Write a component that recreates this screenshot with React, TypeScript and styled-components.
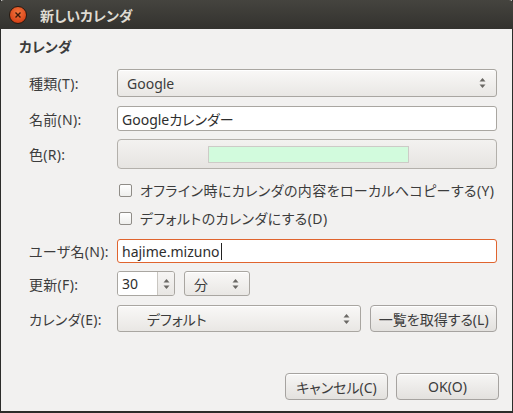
import React, { FC } from "react"
import styled, { createGlobalStyle } from "styled-components"

const GlobalStyle = createGlobalStyle`
  html, body {
    margin: 0;
    padding: 0;
    background: #f2f1f0;
  }
  body {
    font-family: "Noto Sans", "Noto Sans CJK JP", sans-serif;
    font-size: 14px;
    font-feature-settings: "palt";
    color: #3c3c3c;
  }
`

const Window = styled.div`
  width: 513px;
  height: 413px;
  box-sizing: border-box;
  display: flex;
  flex-direction: column;
  background: #f2f1f0;
  border: 1px solid #2c2c2a;
  border-top: none;
  border-bottom-width: 2px;
`

const TitleBar = styled.div`
  height: 29px;
  flex: none;
  display: flex;
  align-items: center;
  gap: 13px;
  padding-left: 9px;
  margin: 0 -1px;
  background: linear-gradient(#45443f, #33322e);
  color: #dfdbd2;
  font-weight: bold;
  font-size: 14px;
  border-radius: 4px 4px 0 0;
`

const CloseBtn = styled.div`
  width: 18px;
  height: 18px;
  border-radius: 50%;
  background: radial-gradient(circle at 50% 35%, #f4773f, #d9461a 70%, #a83312);
  border: 1px solid #2a1a10;
  display: flex;
  align-items: center;
  justify-content: center;
  box-sizing: border-box;
`

const Body = styled.div`
  flex: 1;
  display: flex;
  flex-direction: column;
  padding: 8px 15px 0 17px;
`

const Heading = styled.div`
  font-weight: bold;
  height: 19px;
  line-height: 19px;
  padding-left: 1px;
`

const Row = styled.div<{ $mt: number; $h: number }>`
  display: grid;
  grid-template-columns: 99px 380px;
  align-items: center;
  margin-top: ${p => p.$mt}px;
  height: ${p => p.$h}px;
`

const Label = styled.div`
  padding-left: 11px;
  white-space: nowrap;
  letter-spacing: 0.3px;
`

const Field = styled.div`
  display: flex;
  align-items: center;
  gap: 9px;
  height: 100%;
`

const Combo = styled.div<{ $w?: number }>`
  box-sizing: border-box;
  height: 100%;
  width: ${p => (p.$w ? `${p.$w}px` : "100%")};
  border: 1px solid #a9a6a1;
  border-radius: 3px;
  background: linear-gradient(#f9f8f7, #e9e7e4);
  display: flex;
  align-items: center;
  justify-content: space-between;
  padding: 0 10px 0 9px;
  box-shadow: inset 0 1px 0 #fff;
`

const ComboText = styled.span<{ $pad?: number }>`
  padding-left: ${p => p.$pad || 0}px;
`

const Entry = styled.div<{ $focus?: boolean }>`
  box-sizing: border-box;
  height: 100%;
  width: 100%;
  background: #fff;
  border: 1px solid ${p => (p.$focus ? "#e0642e" : "#a9a6a1")};
  border-radius: 3px;
  display: flex;
  align-items: center;
  padding-left: 4px;
  color: #2e2e2e;
`

const Caret = styled.span`
  display: inline-block;
  width: 1px;
  height: 17px;
  background: #222;
  margin-left: 1px;
`

const ColorButton = styled.div`
  box-sizing: border-box;
  height: 100%;
  width: 100%;
  border: 1px solid #b3b0ab;
  border-radius: 4px;
  background: linear-gradient(#f3f2f0, #e6e4e1);
  display: flex;
  align-items: center;
  justify-content: center;
`

const Swatch = styled.div`
  width: 201px;
  height: 17px;
  box-sizing: border-box;
  background: #d2fbdd;
  border: 1px solid #cdcbc7;
  margin-left: 2px;
`

const CheckRow = styled.label`
  display: flex;
  align-items: center;
  gap: 8px;
  padding-left: 2px;
  white-space: nowrap;
  letter-spacing: 0.4px;
`

const CheckBox = styled.span`
  width: 13px;
  height: 13px;
  flex: none;
  box-sizing: border-box;
  border: 1px solid #8f8c87;
  border-radius: 2px;
  background: linear-gradient(#fff, #eeeeec);
`

const Spin = styled.div`
  box-sizing: border-box;
  width: 58px;
  height: 100%;
  display: flex;
  border: 1px solid #a9a6a1;
  border-radius: 3px;
  overflow: hidden;
`

const SpinValue = styled.div`
  flex: 1;
  background: #fff;
  display: flex;
  align-items: center;
  padding-left: 4px;
  color: #2e2e2e;
`

const SpinButtons = styled.div`
  width: 16px;
  border-left: 1px solid #c9c6c1;
  background: linear-gradient(#f6f5f4, #e8e6e3);
  display: flex;
  align-items: center;
  justify-content: center;
`

const Button = styled.div<{ $w: number }>`
  box-sizing: border-box;
  width: ${p => p.$w}px;
  height: 100%;
  border: 1px solid #a6a3a0;
  border-radius: 4px;
  background: linear-gradient(#f7f6f5, #e3e1de);
  display: flex;
  align-items: center;
  justify-content: center;
  white-space: nowrap;
  box-shadow: inset 0 1px 0 #fff;
`

const Footer = styled.div`
  margin-top: auto;
  margin-bottom: 11px;
  height: 27px;
  display: flex;
  justify-content: flex-end;
  gap: 8px;
  margin-right: -2px;
`

const Arrows: FC = () => (
  <svg width="7" height="12" viewBox="0 0 7 12">
    <path d="M3.5 1 L6.5 4.5 H0.5 Z" fill="#6a6864" />
    <path d="M3.5 11 L6.5 7.5 H0.5 Z" fill="#6a6864" />
  </svg>
)

const App: FC = () => {
  return (
    <>
      <GlobalStyle />
      <Window>
        <TitleBar>
          <CloseBtn>
            <svg width="8" height="8" viewBox="0 0 8 8">
              <path d="M1.5 1.5 L6.5 6.5 M6.5 1.5 L1.5 6.5" stroke="#3a1a0c" strokeWidth="1.4" />
            </svg>
          </CloseBtn>
          新しいカレンダ
        </TitleBar>
        <Body>
          <Heading>カレンダ</Heading>

          <Row $mt={13} $h={28}>
            <Label>種類(T):</Label>
            <Combo>
              <ComboText>Google</ComboText>
              <Arrows />
            </Combo>
          </Row>

          <Row $mt={9} $h={25}>
            <Label>名前(N):</Label>
            <Entry>Googleカレンダー</Entry>
          </Row>

          <Row $mt={8} $h={30}>
            <Label>色(R):</Label>
            <ColorButton>
              <Swatch />
            </ColorButton>
          </Row>

          <Row $mt={10} $h={22}>
            <span />
            <CheckRow>
              <CheckBox />
              オフライン時にカレンダの内容をローカルへコピーする(Y)
            </CheckRow>
          </Row>

          <Row $mt={6} $h={22}>
            <span />
            <CheckRow>
              <CheckBox />
              デフォルトのカレンダにする(D)
            </CheckRow>
          </Row>

          <Row $mt={10} $h={24}>
            <Label>ユーザ名(N):</Label>
            <Entry $focus>
              hajime.mizuno
              <Caret />
            </Entry>
          </Row>

          <Row $mt={8} $h={25}>
            <Label>更新(F):</Label>
            <Field>
              <Spin>
                <SpinValue>30</SpinValue>
                <SpinButtons>
                  <Arrows />
                </SpinButtons>
              </Spin>
              <Combo $w={66}>
                <ComboText>分</ComboText>
                <Arrows />
              </Combo>
            </Field>
          </Row>

          <Row $mt={9} $h={27}>
            <Label>カレンダ(E):</Label>
            <Field>
              <Combo $w={245}>
                <ComboText $pad={20}>デフォルト</ComboText>
                <Arrows />
              </Combo>
              <Button $w={127}>一覧を取得する(L)</Button>
            </Field>
          </Row>

          <Footer>
            <Button $w={103}>キャンセル(C)</Button>
            <Button $w={103}>OK(O)</Button>
          </Footer>
        </Body>
      </Window>
    </>
  )
}

export default App
